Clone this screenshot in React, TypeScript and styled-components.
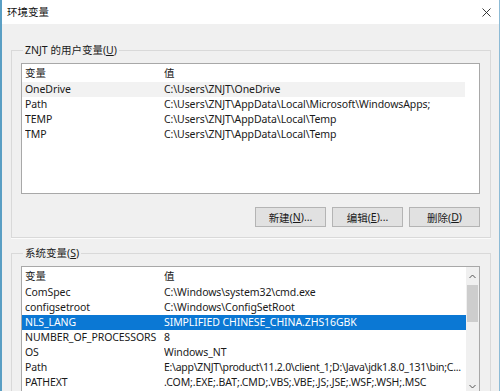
import React from "react";
import styled, { createGlobalStyle } from "styled-components";

const Global = createGlobalStyle`
  html, body { margin: 0; padding: 0; background: #f0f0f0; }
  body { font-family: "Noto Sans", "Noto Sans CJK SC", sans-serif; }
  * { box-sizing: border-box; }
`;

const Window = styled.div`
  width: 500px;
  height: 391px;
  overflow: hidden;
  background: #f0f0f0;
  border-left: 2px solid #5a9fc4;
  border-right: 1px solid #8dbbd6;
  font-family: "Noto Sans", "Noto Sans CJK SC", sans-serif;
  font-size: 10.5px;
  color: #1a1a1a;
`;

const TitleBar = styled.div`
  height: 24px;
  background: #ffffff;
  display: flex;
  align-items: center;
  justify-content: space-between;
  padding: 0 8px 0 5px;
`;

const Title = styled.span`
  font-size: 10.5px;
  line-height: 14px;
  color: #111;
`;

const Close = styled.svg`
  width: 9px;
  height: 9px;
`;

const Content = styled.div`
  padding: 0 8px 0 9px;
`;

const Group = styled.fieldset<{ $top: number }>`
  margin: ${(p) => p.$top}px 0 0 0;
  padding: 6px 10px 10px 9px;
  border: 1px solid #d9d9d9;
  box-shadow: 0 1px 0 #fbfbfb;
  min-width: 0;
`;

const Legend = styled.legend`
  padding: 0 2px;
  margin-left: 2px;
  font-size: 10.5px;
  line-height: 14px;
  color: #1a1a1a;
`;

const Key = styled.span`
  text-decoration: underline;
`;

const ListView = styled.div<{ $height: number }>`
  height: ${(p) => p.$height}px;
  background: #ffffff;
  border: 1px solid #a8a8a8;
  display: flex;
  overflow: hidden;
`;

const Rows = styled.div`
  flex: 1;
  min-width: 0;
  display: flex;
  flex-direction: column;
`;

const Row = styled.div<{ $sel?: boolean; $hover?: boolean; $head?: boolean }>`
  display: grid;
  grid-template-columns: 139px 1fr;
  height: ${(p) => (p.$head ? 18 : 15)}px;
  line-height: ${(p) => (p.$head ? 18 : 15)}px;
  padding-left: 3px;
  white-space: nowrap;
  overflow: hidden;
  background: ${(p) => (p.$sel ? "#0b78d4" : p.$hover ? "#f2f2f2" : "transparent")};
  color: ${(p) => (p.$sel ? "#ffffff" : "#1a1a1a")};
  width: ${(p) => (p.$hover ? "443px" : "auto")};
`;

const Cell = styled.span<{ $squeeze?: boolean }>`
  overflow: hidden;
  letter-spacing: ${(p) => (p.$squeeze ? "-0.28px" : "-0.09px")};
`;

const ScrollBar = styled.div`
  width: 13px;
  flex: none;
  background: #f0f0f0;
  display: flex;
  flex-direction: column;
  align-items: center;
`;

const Arrow = styled.svg<{ $down?: boolean }>`
  width: 7px;
  height: 5px;
  margin: ${(p) => (p.$down ? "auto 0 4px" : "7px 0 6px")};
`;

const Thumb = styled.div`
  width: 11px;
  height: 37px;
  background: #cdcdcd;
`;

const Buttons = styled.div`
  display: flex;
  justify-content: flex-end;
  gap: 6px;
  margin-top: 13px;
`;

const Button = styled.div`
  width: 71px;
  height: 20px;
  background: #e1e1e1;
  border: 1px solid #b4b4b4;
  display: flex;
  align-items: center;
  justify-content: center;
  font-size: 10.5px;
  color: #1a1a1a;
`;

const userVars: [string, string][] = [
  ["OneDrive", "C:\\Users\\ZNJT\\OneDrive"],
  ["Path", "C:\\Users\\ZNJT\\AppData\\Local\\Microsoft\\WindowsApps;"],
  ["TEMP", "C:\\Users\\ZNJT\\AppData\\Local\\Temp"],
  ["TMP", "C:\\Users\\ZNJT\\AppData\\Local\\Temp"],
];

const sysVars: [string, string][] = [
  ["ComSpec", "C:\\Windows\\system32\\cmd.exe"],
  ["configsetroot", "C:\\Windows\\ConfigSetRoot"],
  ["NLS_LANG", "SIMPLIFIED CHINESE_CHINA.ZHS16GBK"],
  ["NUMBER_OF_PROCESSORS", "8"],
  ["OS", "Windows_NT"],
  ["Path", "E:\\app\\ZNJT\\product\\11.2.0\\client_1;D:\\Java\\jdk1.8.0_131\\bin;C..."],
  ["PATHEXT", ".COM;.EXE;.BAT;.CMD;.VBS;.VBE;.JS;.JSE;.WSF;.WSH;.MSC"],
];

export default function App() {
  return (
    <>
      <Global />
      <Window>
        <TitleBar>
          <Title>环境变量</Title>
          <Close viewBox="0 0 9 9">
            <path d="M0.5 0.5 L8.5 8.5 M8.5 0.5 L0.5 8.5" stroke="#222" strokeWidth="0.9" />
          </Close>
        </TitleBar>
        <Content>
          <Group $top={19}>
            <Legend>
              ZNJT 的用户变量(<Key>U</Key>)
            </Legend>
            <ListView $height={131}>
              <Rows>
                <Row $head>
                  <Cell>变量</Cell>
                  <Cell>值</Cell>
                </Row>
                {userVars.map(([k, v], i) => (
                  <Row key={k} $hover={i === 0}>
                    <Cell>{k}</Cell>
                    <Cell>{v}</Cell>
                  </Row>
                ))}
              </Rows>
            </ListView>
            <Buttons>
              <Button>
                新建(<Key>N</Key>)...
              </Button>
              <Button>
                编辑(<Key>E</Key>)...
              </Button>
              <Button>
                删除(<Key>D</Key>)
              </Button>
            </Buttons>
          </Group>
          <Group $top={8}>
            <Legend>
              系统变量(<Key>S</Key>)
            </Legend>
            <ListView $height={128}>
              <Rows>
                <Row $head>
                  <Cell>变量</Cell>
                  <Cell>值</Cell>
                </Row>
                {sysVars.map(([k, v]) => (
                  <Row key={k} $sel={k === "NLS_LANG"}>
                    <Cell>{k}</Cell>
                    <Cell $squeeze={v.length > 60}>{v}</Cell>
                  </Row>
                ))}
              </Rows>
              <ScrollBar>
                <Arrow viewBox="0 0 7 5">
                  <path d="M0.5 4 L3.5 1 L6.5 4" stroke="#555" strokeWidth="1" fill="none" />
                </Arrow>
                <Thumb />
                <Arrow $down viewBox="0 0 7 5">
                  <path d="M0.5 1 L3.5 4 L6.5 1" stroke="#555" strokeWidth="1" fill="none" />
                </Arrow>
              </ScrollBar>
            </ListView>
          </Group>
        </Content>
      </Window>
    </>
  );
}
